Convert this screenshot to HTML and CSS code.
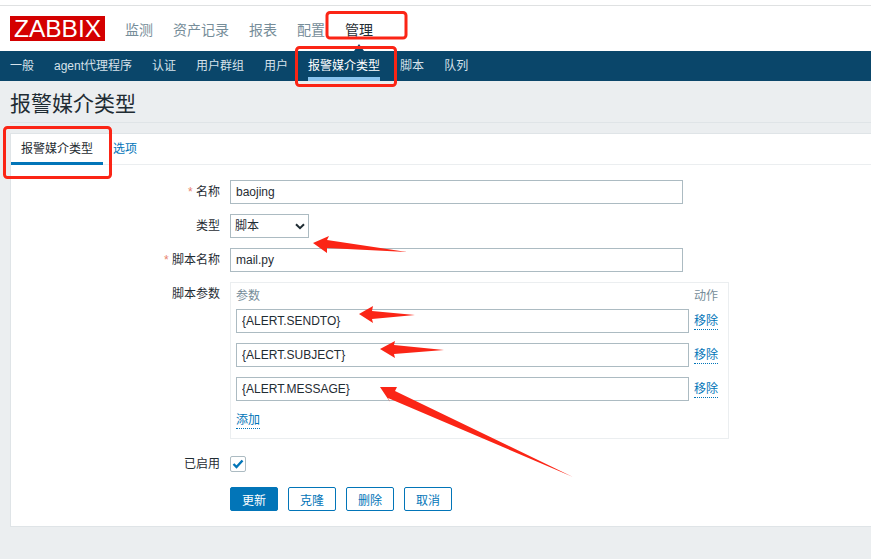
FILE: index.html
```html
<!DOCTYPE html>
<html lang="zh-CN">
<head>
    <meta charset="UTF-8">
    <meta name="viewport" content="width=device-width, initial-scale=1.0">
    <title>报警媒介类型</title>
    <link rel="stylesheet" href="styles.css">
</head>
<body>
    <div class="top-strip"></div>
    <header class="main-nav">
        <div class="logo">ZABBIX</div>
        <a href="#" class="main-link">监测</a>
        <a href="#" class="main-link">资产记录</a>
        <a href="#" class="main-link">报表</a>
        <a href="#" class="main-link">配置</a>
        <a href="#" class="main-link selected">管理</a>
    </header>
    <nav class="sub-nav">
        <a href="#" class="sub-link">一般</a>
        <a href="#" class="sub-link">agent代理程序</a>
        <a href="#" class="sub-link">认证</a>
        <a href="#" class="sub-link">用户群组</a>
        <a href="#" class="sub-link">用户</a>
        <a href="#" class="sub-link selected">报警媒介类型</a>
        <a href="#" class="sub-link">脚本</a>
        <a href="#" class="sub-link">队列</a>
    </nav>
    <div class="page-head">
        <h1>报警媒介类型</h1>
    </div>

    <main class="card">
        <div class="tabs">
            <a href="#" class="tab selected">报警媒介类型</a>
            <a href="#" class="tab">选项</a>
        </div>
        <form class="form">
            <label class="label"><span class="req">*</span> 名称</label>
            <input class="field wide" type="text" value="baojing">

            <label class="label">类型</label>
            <div class="select-wrap">
                <select class="select"><option>脚本</option></select>
                <svg class="chevron" width="10" height="7" viewBox="0 0 10 7"><path d="M1 1.2 L5 5.2 L9 1.2" fill="none" stroke="#1f2c33" stroke-width="2"/></svg>
            </div>

            <label class="label"><span class="req">*</span> 脚本名称</label>
            <input class="field wide" type="text" value="mail.py">

            <label class="label params-label">脚本参数</label>
            <div class="params">
                <div class="params-head"><span>参数</span><span>动作</span></div>
                <div class="param-row">
                    <input class="field" type="text" value="{ALERT.SENDTO}">
                    <a href="#" class="link">移除</a>
                </div>
                <div class="param-row">
                    <input class="field" type="text" value="{ALERT.SUBJECT}">
                    <a href="#" class="link">移除</a>
                </div>
                <div class="param-row">
                    <input class="field" type="text" value="{ALERT.MESSAGE}">
                    <a href="#" class="link">移除</a>
                </div>
                <div class="add-row"><a href="#" class="link">添加</a></div>
            </div>

            <label class="label enabled-label">已启用</label>
            <div class="enabled">
                <span class="check">
                    <svg width="12" height="10" viewBox="0 0 12 10"><path d="M1.5 5 L4.5 8 L10.5 1.5" fill="none" stroke="#0275b8" stroke-width="2.4"/></svg>
                </span>
            </div>

            <div class="buttons">
                <button type="button" class="btn primary">更新</button>
                <button type="button" class="btn">克隆</button>
                <button type="button" class="btn">删除</button>
                <button type="button" class="btn">取消</button>
            </div>
        </form>
    </main>

    <!-- red marks drawn on top of the screenshot -->
    <svg class="marks" width="871" height="559" viewBox="0 0 871 559">
        <path class="triangle" d="M354 51 L359 44 L364 51 Z"/>
        <rect class="box" x="327" y="12.5" width="79" height="25.5" rx="3"/>
        <rect class="box" x="296.5" y="47.5" width="99" height="38" rx="3"/>
        <rect class="box" x="4.5" y="127.5" width="106" height="50" rx="3"/>
        <path class="arrow" d="M313 243 L329 236 L327 240 L407 252 L327 248 L327 253 Z"/>
        <path class="arrow" d="M359 314 L373 306 L372 311 L415 315 L372 319 L373 323 Z"/>
        <path class="arrow" d="M380 349 L395 341 L394 345 L444 350 L394 354 L395 358 Z"/>
        <path class="arrow" d="M380 387 L397 387 L395 391 L573 477 L388 398 L390 402 Z"/>
    </svg>
</body>
</html>
```

FILE: styles.css
```css
* {
  box-sizing: border-box;
}

html,
body {
  margin: 0;
  height: 559px;
  overflow: hidden;
}

body {
  position: relative;
  background-color: #ebeef0;
  color: #1f2c33;
  font-family: "Liberation Sans", "Noto Sans CJK SC", sans-serif;
  font-size: 12px;
}

a {
  text-decoration: none;
}

.top-strip {
  height: 6px;
  background-color: #fff;
  border-bottom: 1px solid #dfe1e2;
}

/* main menu */
.main-nav {
  display: flex;
  align-items: center;
  height: 45px;
  padding-left: 10px;
  background-color: #fff;
}

.logo {
  width: 95px;
  height: 25px;
  margin-right: 20px;
  background-color: #d40000;
  color: #fff;
  font-size: 24.5px;
  line-height: 26px;
  text-align: center;
}

.main-link {
  margin-right: 20px;
  color: #768d99;
  font-size: 14px;
}

.main-link.selected {
  color: #1f2c33;
}

/* second level menu */
.sub-nav {
  display: flex;
  gap: 20px;
  height: 30px;
  padding-left: 10px;
  background-color: #0a466a;
}

.sub-link {
  color: #d6e2ea;
  line-height: 31px;
}

.sub-link.selected {
  color: #fff;
  border-bottom: 4px solid #8ac4ee;
}

.page-head {
  height: 42px;
  margin-left: 10px;
  border-bottom: 1px solid #dfe4e7;
}

h1 {
  margin: 0;
  font-size: 21px;
  font-weight: normal;
  line-height: 45px;
}

/* white card */
.card {
  height: 394px;
  margin: 10px 0 0 10px;
  background-color: #fff;
  border: 1px solid #dfe4e7;
  border-right: 0;
}

.tabs {
  display: flex;
  height: 31px;
  border-bottom: 1px solid #ebeef0;
}

.tab {
  padding: 0 10px;
  color: #0275b8;
  line-height: 30px;
}

.tab.selected {
  height: 31px;
  color: #1f2c33;
  border-bottom: 3px solid #0275b8;
}

.form {
  display: grid;
  grid-template-columns: 209px 1fr;
  column-gap: 10px;
  row-gap: 10px;
  padding-top: 15px;
}

.label {
  color: #1f2c33;
  line-height: 24px;
  text-align: right;
}

.req {
  color: #e8836f;
}

.field {
  display: block;
  width: 453px;
  height: 24px;
  padding: 0 5px;
  border: 1px solid #acbbc2;
  background-color: #fff;
  color: #1f2c33;
  font: inherit;
}

.select-wrap {
  position: relative;
  width: 79px;
  height: 24px;
}

.select {
  width: 79px;
  height: 24px;
  padding: 0 4px;
  border: 1px solid #acbbc2;
  border-radius: 0;
  background-color: #fff;
  color: #1f2c33;
  font: inherit;
  appearance: none;
}

.chevron {
  position: absolute;
  top: 9px;
  right: 4px;
}

.params {
  width: 499px;
  height: 157px;
  padding: 4px 10px 0 5px;
  border: 1px solid #ebeef0;
}

.params-head {
  display: flex;
  justify-content: space-between;
  height: 22px;
  color: #768d99;
  line-height: 19px;
}

.param-row {
  display: flex;
  gap: 5px;
  margin-bottom: 10px;
  line-height: 24px;
}

.link {
  align-self: center;
  height: 17px;
  margin-top: 1px;
  color: #0275b8;
  line-height: 17px;
  border-bottom: 1px dotted #0275b8;
}

.add-row {
  display: flex;
}

.enabled-label {
  margin-top: 3px;
}

.enabled {
  display: flex;
  align-items: center;
  height: 24px;
  margin-top: 3px;
}

.check {
  display: flex;
  align-items: center;
  justify-content: center;
  width: 16px;
  height: 16px;
  border: 1px solid #acbbc2;
  border-radius: 2px;
}

.buttons {
  display: flex;
  grid-column: 2;
  gap: 10px;
  margin-top: 1px;
}

.btn {
  width: 48px;
  height: 24px;
  padding: 0;
  border: 1px solid #0275b8;
  border-radius: 2px;
  background-color: #fff;
  color: #0275b8;
  font: inherit;
}

.btn.primary {
  background-color: #0275b8;
  color: #fff;
}

/* annotation layer */
.marks {
  position: absolute;
  top: 0;
  left: 0;
  pointer-events: none;
}

.triangle {
  fill: #0a466a;
}

.box {
  fill: none;
  stroke: #fb2516;
  stroke-width: 3;
}

.arrow {
  fill: #fb2516;
}
```
